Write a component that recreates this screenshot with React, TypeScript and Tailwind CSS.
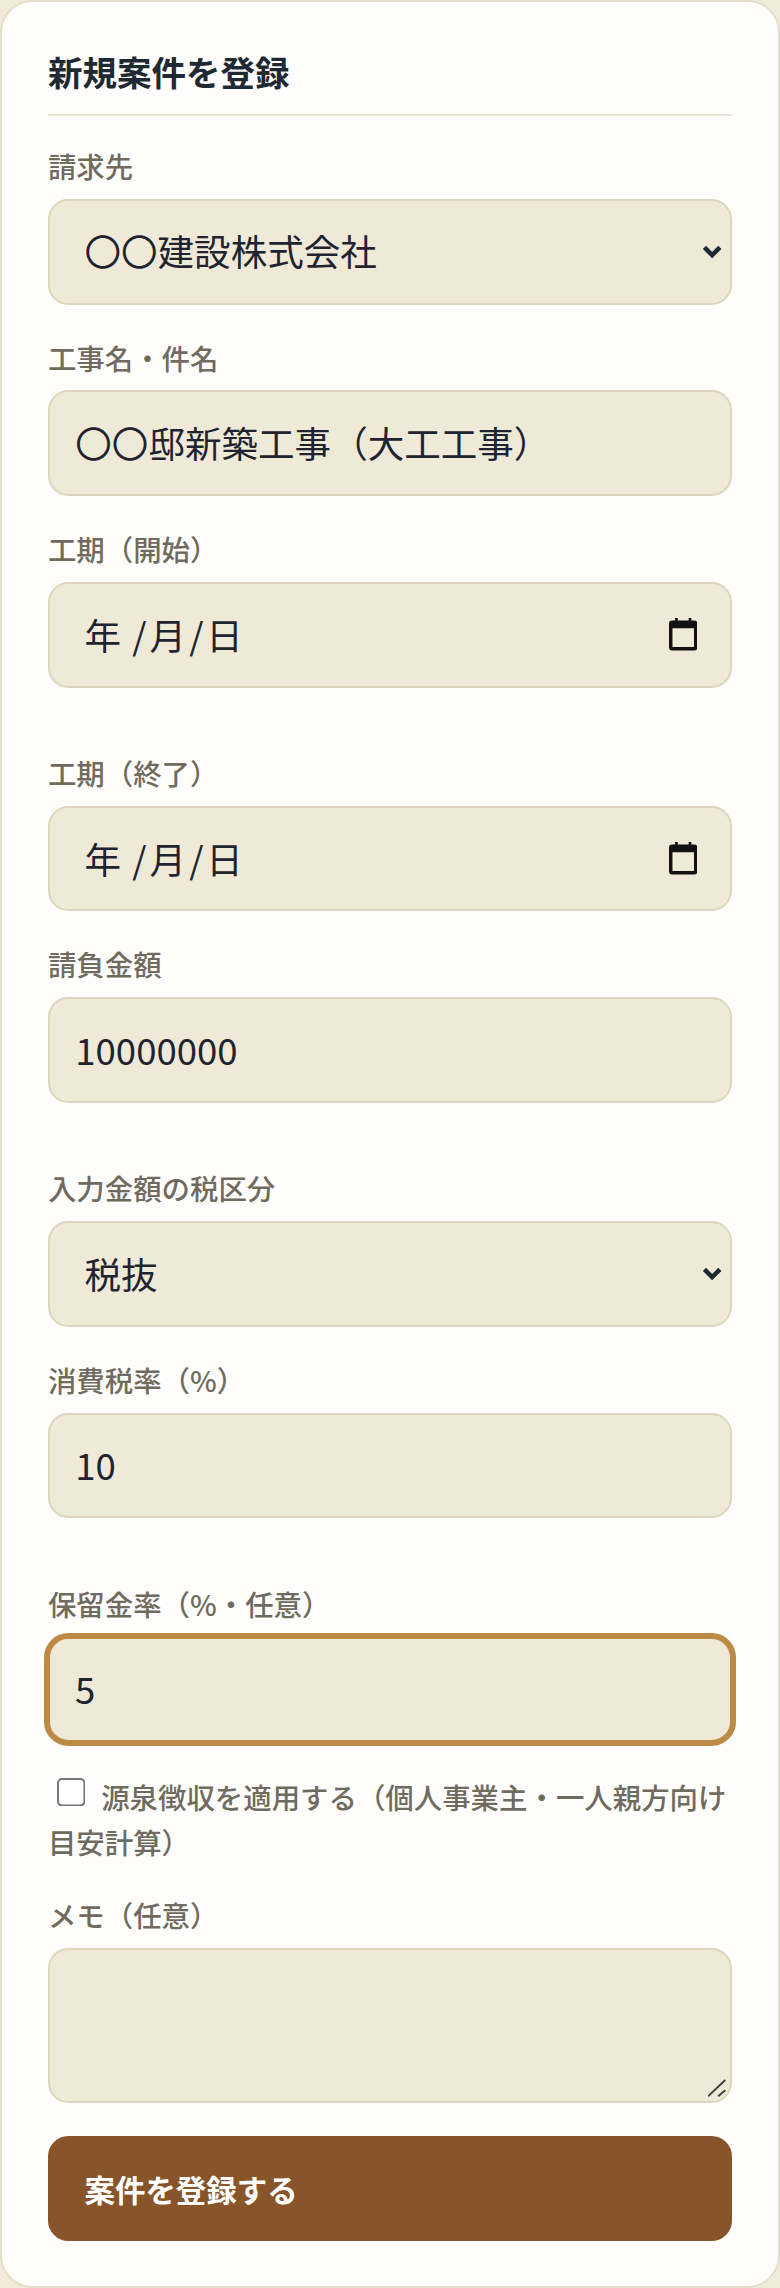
import React from "react";

const font = "font-['Noto_Sans_CJK_JP','Noto_Sans',sans-serif]";
const control =
  "block w-full h-[52px] rounded-[10px] border border-[#ddd5bd] bg-[#efe9d8] px-[12.500px] text-[18px] text-[#1f2430] outline-none";
const textInput = `${control} pb-[1px]`;

function Field({ label, gap = "mb-[16.250px]", children }: { label: string; gap?: string; children: React.ReactNode }) {
  return (
    <div className={gap}>
      <label className="-mt-[0.500px] mb-[5.500px] block text-[14px] leading-[21px] font-medium text-[#706b5f]">{label}</label>
      {children}
    </div>
  );
}

function DateBox() {
  return (
    <div className={`${control} flex items-center justify-between pl-[17px] pr-[16.300px]`}>
      <span className="relative top-[0.500px]">
        <span>年</span>
        <span className="ml-[5.500px]">/</span>
        <span className="ml-[1.500px]">月</span>
        <span className="ml-[1.500px]">/</span>
        <span className="ml-[1.300px]">日</span>
      </span>
      <svg width="14" height="16" viewBox="0 0 14 16" aria-hidden="true">
        <path
          fill="#111"
          fillRule="evenodd"
          d="M3 0h1.300v1.200h5.400V0H11v1.200h1.400A1.600 1.600 0 0 1 14 2.800v11.600a1.600 1.600 0 0 1-1.600 1.600H1.600A1.600 1.600 0 0 1 0 14.400V2.800A1.600 1.600 0 0 1 1.600 1.200H3zM1.700 5v9q0 .3.300.3h10q.3 0 .3-.3V5z"
        />
      </svg>
    </div>
  );
}

function SelectBox({ value }: { value: string }) {
  return (
    <div className="relative">
      <select className={`${control} appearance-none pl-[17px]`} defaultValue={value}>
        <option value={value}>{value}</option>
      </select>
      <svg
        width="10"
        height="7"
        viewBox="0 0 10 7"
        className="pointer-events-none absolute top-[22.500px] right-[5px]"
        aria-hidden="true"
      >
        <path d="M1.200 1.200 5 5l3.800-3.800" fill="none" stroke="#1f2933" strokeWidth="2.200" />
      </svg>
    </div>
  );
}

export default function App() {
  return (
    <div className="h-[1126.400px] w-[384px] bg-[#f0eadb] [zoom:2.03125]">
      <div className={`${font} h-[1126.400px] rounded-[16px] border border-[#e5dfca] bg-[#fffefc] px-[22.600px] pt-[22px]`}>
        <h2 className="mb-[15px] border-b border-[#e8e3d3] pb-[9px] text-[17px] leading-[24px] font-bold text-[#1f2933]">
          新規案件を登録
        </h2>

        <Field label="請求先">
          <SelectBox value="〇〇建設株式会社" />
        </Field>

        <Field label="工事名・件名">
          <input className={textInput} defaultValue="〇〇邸新築工事（大工工事）" />
        </Field>

        <Field label="工期（開始）" gap="mb-[32.250px]">
          <DateBox />
        </Field>

        <Field label="工期（終了）">
          <DateBox />
        </Field>

        <Field label="請負金額" gap="mb-[32.250px]">
          <input className={textInput} type="text" defaultValue="10000000" />
        </Field>

        <Field label="入力金額の税区分">
          <SelectBox value="税抜" />
        </Field>

        <Field label="消費税率（%）" gap="mb-[32.250px]">
          <input className={textInput} type="text" defaultValue="10" />
        </Field>

        <Field label="保留金率（%・任意）">
          <input
            className="-mx-[2px] -my-[2px] block h-[56px] w-[calc(100%+4px)] rounded-[12px] border-[3.100px] border-[#bc8a45] bg-[#efe9d8] px-[12.400px] pb-[1px] text-[18px] text-[#1f2430] outline-none"
            type="text"
            defaultValue="5"
          />
        </Field>

        <label className="mb-[15.200px] block text-[14px] leading-[22px] font-medium text-[#706b5f]">
          <input
            type="checkbox"
            className="relative top-[-1px] mr-[7.400px] ml-[4.500px] h-[14.300px] w-[14.300px]"
          />
          源泉徴収を適用する（個人事業主・一人親方向け目安計算）
        </label>

        <Field label="メモ（任意）">
          <div className="relative">
            <textarea className={`${control} h-[76px] resize-none`} />
            <svg
              width="12"
              height="12"
              viewBox="0 0 24 24"
              className="pointer-events-none absolute right-0 bottom-0"
              aria-hidden="true"
            >
              <path d="M0 18 17 2M10 18l7-6" fill="none" stroke="#444" strokeWidth="2" />
            </svg>
          </div>
        </Field>

        <button className="block h-[52px] w-full rounded-[10px] bg-[#88552a] px-[18px] pt-[1px] text-left text-[15px] font-bold text-white">
          案件を登録する
        </button>
      </div>
    </div>
  );
}
